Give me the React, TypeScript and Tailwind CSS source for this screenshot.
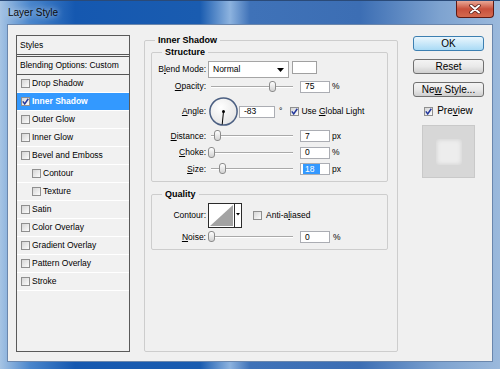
import React from 'react';

const Check: React.FC<{ checked?: boolean }> = ({ checked }) => (
  <span className="flex h-[9px] w-[9px] shrink-0 items-center justify-center border border-[#8f8f8f] bg-gradient-to-br from-[#d6d6d6] to-[#fcfcfc]">
    {checked && (
      <svg width="7" height="7" viewBox="0 0 7 7">
        <path d="M0.8 3.4 L2.7 5.9 L6.3 0.7" fill="none" stroke="#22369c" strokeWidth="1.5" />
      </svg>
    )}
  </span>
);

const Slider: React.FC<{ pos: number }> = ({ pos }) => (
  <div className="relative ml-[5px] h-[12px] w-[82px] shrink-0">
    <div className="absolute left-0 right-0 top-[5px] h-[2px] border-t border-[#a9a9a9] bg-white" />
    <div
      className="absolute top-0 h-[11px] w-[7px] rounded-[3px] border border-[#8c8c8c] bg-gradient-to-b from-white to-[#d2d2d2]"
      style={{ left: pos - 3 }}
    />
  </div>
);

const Field: React.FC<{ children: React.ReactNode; w?: string }> = ({ children, w = 'w-[30px] ml-[7px]' }) => (
  <div className={`flex h-[12px] shrink-0 items-center border border-[#abadb3] bg-white pl-[4px] ${w}`}>{children}</div>
);

const styleItems: { name: string; sub?: boolean; checked?: boolean; selected?: boolean }[] = [
  { name: 'Drop Shadow' },
  { name: 'Inner Shadow', checked: true, selected: true },
  { name: 'Outer Glow' },
  { name: 'Inner Glow' },
  { name: 'Bevel and Emboss' },
  { name: 'Contour', sub: true },
  { name: 'Texture', sub: true },
  { name: 'Satin' },
  { name: 'Color Overlay' },
  { name: 'Gradient Overlay' },
  { name: 'Pattern Overlay' },
  { name: 'Stroke' },
];

const Button: React.FC<{ children: React.ReactNode; primary?: boolean }> = ({ children, primary }) => (
  <div
    className={`flex h-[15px] w-[71px] items-center justify-center rounded-[3px] border text-[10px] leading-none ${
      primary
        ? 'border-[#3c7fb1] bg-gradient-to-b from-[#eaf6fd] to-[#a9daf5]'
        : 'border-[#707070] bg-gradient-to-b from-[#f4f4f4] via-[#e9e9e9] to-[#cfcfcf]'
    }`}
  >
    {children}
  </div>
);

export default function App() {
  return (
    <div className="h-[369px] w-[500px] overflow-hidden bg-[linear-gradient(90deg,#a6c4e4_0%,#4a86cc_6%,#1558b0_15%,#1a5cb0_40%,#8db3df_46%,#3f72b8_50%,#3c6eb4_72%,#7ea3d0_88%,#9bb9dc_100%)] font-['Liberation_Sans',Arial,sans-serif] text-[8.5px] leading-[11px] text-black">
      {/* title bar */}
      <div className="flex h-[24px] items-start justify-between border-t border-[#2a4a78]">
        <div className="ml-[8px] mt-[6px] text-[10px] leading-[12px] text-[#0c0c0c] [text-shadow:0_0_6px_rgba(255,255,255,0.9)]">
          Layer Style
        </div>
        <div className="mr-[6px] flex h-[17px] w-[38px] items-center justify-center rounded-b-[4px] border border-t-0 border-[#5e1a14] bg-gradient-to-b from-[#e9a796] via-[#c8503c] to-[#d46a4f]">
          <svg width="12" height="10" viewBox="0 0 12 10">
            <path d="M2 1.5 L10 8.5 M10 1.5 L2 8.5" stroke="#4a1410" strokeWidth="3.4" strokeLinecap="round" />
            <path d="M2 1.5 L10 8.5 M10 1.5 L2 8.5" stroke="#ffffff" strokeWidth="2" strokeLinecap="round" />
          </svg>
        </div>
      </div>

      {/* client area */}
      <div className="mx-[7px] flex h-[338px] border border-[#6a86ac] bg-[#f0f0f0] pl-[8px] pt-[10px]">
        {/* styles list */}
        <div className="flex h-[317px] w-[114px] shrink-0 flex-col border border-[#5a5a5a] bg-[#f1f1f1]">
          <div className="flex h-[21px] items-center border-b-[3px] border-double border-[#555] pl-[3px]">Styles</div>
          <div className="flex h-[18px] items-center border-b border-[#555] pl-[3px]">Blending Options: Custom</div>
          {styleItems.map((it) => (
            <div
              key={it.name}
              className={`flex h-[18px] items-center border-b border-white ${it.sub ? 'pl-[15px]' : 'pl-[4px]'} ${
                it.selected ? 'bg-[#3399ff] font-bold text-white' : ''
              }`}
            >
              <Check checked={it.checked} />
              <span className="ml-[2px]">{it.name}</span>
            </div>
          ))}
        </div>

        {/* Inner Shadow group */}
        <fieldset className="ml-[14px] h-[317px] w-[254px] shrink-0 rounded-[2px] border border-[#cdcdcd]">
          <legend className="ml-[10px] px-[3px] text-[9px] font-bold leading-[11px]">Inner Shadow</legend>

          <fieldset className="ml-[6px] mt-[1px] h-[135px] w-[237px] rounded-[2px] border border-[#cdcdcd]">
            <legend className="ml-[10px] px-[3px] text-[9px] font-bold leading-[11px]">Structure</legend>

            <div className="mt-[3px] flex h-[17px] items-center">
              <span className="w-[54px] text-right">
                B<u>l</u>end Mode:
              </span>
              <div className="ml-[2px] flex h-[17px] w-[81px] items-center justify-between border border-[#a5a5a5] bg-white pl-[4px] pr-[4px]">
                <span>Normal</span>
                <svg width="7" height="4" viewBox="0 0 7 4">
                  <path d="M0 0 H7 L3.5 4 Z" fill="#000" />
                </svg>
              </div>
              <div className="ml-[3px] h-[13px] w-[25px] self-start border border-[#a0a0a0] bg-white" />
            </div>

            <div className="flex h-[17px] items-center">
              <span className="w-[54px] text-right">
                <u>O</u>pacity:
              </span>
              <Slider pos={61} />
              <Field>75</Field>
              <span className="ml-[2px]">%</span>
            </div>

            <div className="flex h-[33px] items-center">
              <span className="w-[54px] text-right">
                <u>A</u>ngle:
              </span>
              <svg className="ml-[3px] shrink-0" width="29" height="29" viewBox="0 0 29 29">
                <defs>
                  <radialGradient id="dial" cx="0.4" cy="0.35" r="0.7">
                    <stop offset="0" stopColor="#ffffff" />
                    <stop offset="1" stopColor="#e4e4e4" />
                  </radialGradient>
                </defs>
                <circle cx="14.5" cy="14.5" r="13.6" fill="url(#dial)" stroke="#4b5f82" strokeWidth="1.5" />
                <line x1="14.5" y1="14.5" x2="13.2" y2="27.5" stroke="#000" strokeWidth="1" />
                <circle cx="14.5" cy="14.5" r="1.5" fill="#000" />
              </svg>
              <Field w="w-[36px] ml-[1px]">-83</Field>
              <span className="ml-[4px]">°</span>
              <span className="ml-[8px]">
                <Check checked />
              </span>
              <span className="ml-[2px]">
                Use <u>G</u>lobal Light
              </span>
            </div>

            <div className="flex h-[16px] items-center">
              <span className="w-[54px] text-right">
                <u>D</u>istance:
              </span>
              <Slider pos={6} />
              <Field>7</Field>
              <span className="ml-[2px]">px</span>
            </div>

            <div className="flex h-[17px] items-center">
              <span className="w-[54px] text-right">
                <u>C</u>hoke:
              </span>
              <Slider pos={0} />
              <Field>0</Field>
              <span className="ml-[2px]">%</span>
            </div>

            <div className="flex h-[16px] items-center">
              <span className="w-[54px] text-right">
                <u>S</u>ize:
              </span>
              <Slider pos={11} />
              <div className="ml-[7px] flex h-[12px] w-[30px] shrink-0 items-stretch border border-[#abadb3] bg-white pl-[2px]">
                <span className="flex items-center bg-[#3399ff] pl-[2px] pr-[6px] text-white">18</span>
              </div>
              <span className="ml-[2px]">px</span>
            </div>
          </fieldset>

          <fieldset className="ml-[6px] mt-[7px] h-[61px] w-[237px] rounded-[2px] border border-[#cdcdcd]">
            <legend className="ml-[10px] px-[3px] text-[9px] font-bold leading-[11px]">Quality</legend>

            <div className="mt-[1px] flex h-[28px] items-center">
              <span className="w-[54px] text-right">Contour:</span>
              <svg className="ml-[2px] shrink-0" width="34" height="25" viewBox="0 0 34 25">
                <rect x="0.5" y="0.5" width="33" height="24" fill="#fff" stroke="#2b2b2b" />
                <path d="M2 23 L25 2 L25 23 Z" fill="#a3a3a3" />
                <line x1="26.5" y1="0.5" x2="26.5" y2="24.5" stroke="#2b2b2b" />
                <path d="M28 10 H32 L30 12.5 Z" fill="#000" />
              </svg>
              <span className="ml-[11px]">
                <Check />
              </span>
              <span className="ml-[4px]">
                Anti-a<u>l</u>iased
              </span>
            </div>

            <div className="flex h-[16px] items-center">
              <span className="w-[54px] text-right">
                <u>N</u>oise:
              </span>
              <Slider pos={0} />
              <Field>0</Field>
              <span className="ml-[3px]">%</span>
            </div>
          </fieldset>
        </fieldset>

        {/* buttons */}
        <div className="ml-[15px] mt-[1px] flex w-[71px] shrink-0 flex-col items-center">
          <Button primary>OK</Button>
          <div className="mt-[8px]">
            <Button>Reset</Button>
          </div>
          <div className="mt-[8px]">
            <Button>
              Ne<u>w</u>&nbsp;Style...
            </Button>
          </div>
          <div className="mt-[8px] flex items-center text-[10px] leading-[12px]">
            <Check checked />
            <span className="ml-[4px]">
              Pre<u>v</u>iew
            </span>
          </div>
          <div className="mt-[8px] flex h-[53px] w-[53px] items-center justify-center border border-[#c9c9c9] bg-[#d7d7d7]">
            <div className="h-[26px] w-[26px] bg-[#ededed] shadow-[inset_0_0_5px_rgba(0,0,0,0.14)]" />
          </div>
        </div>
      </div>
    </div>
  );
}
